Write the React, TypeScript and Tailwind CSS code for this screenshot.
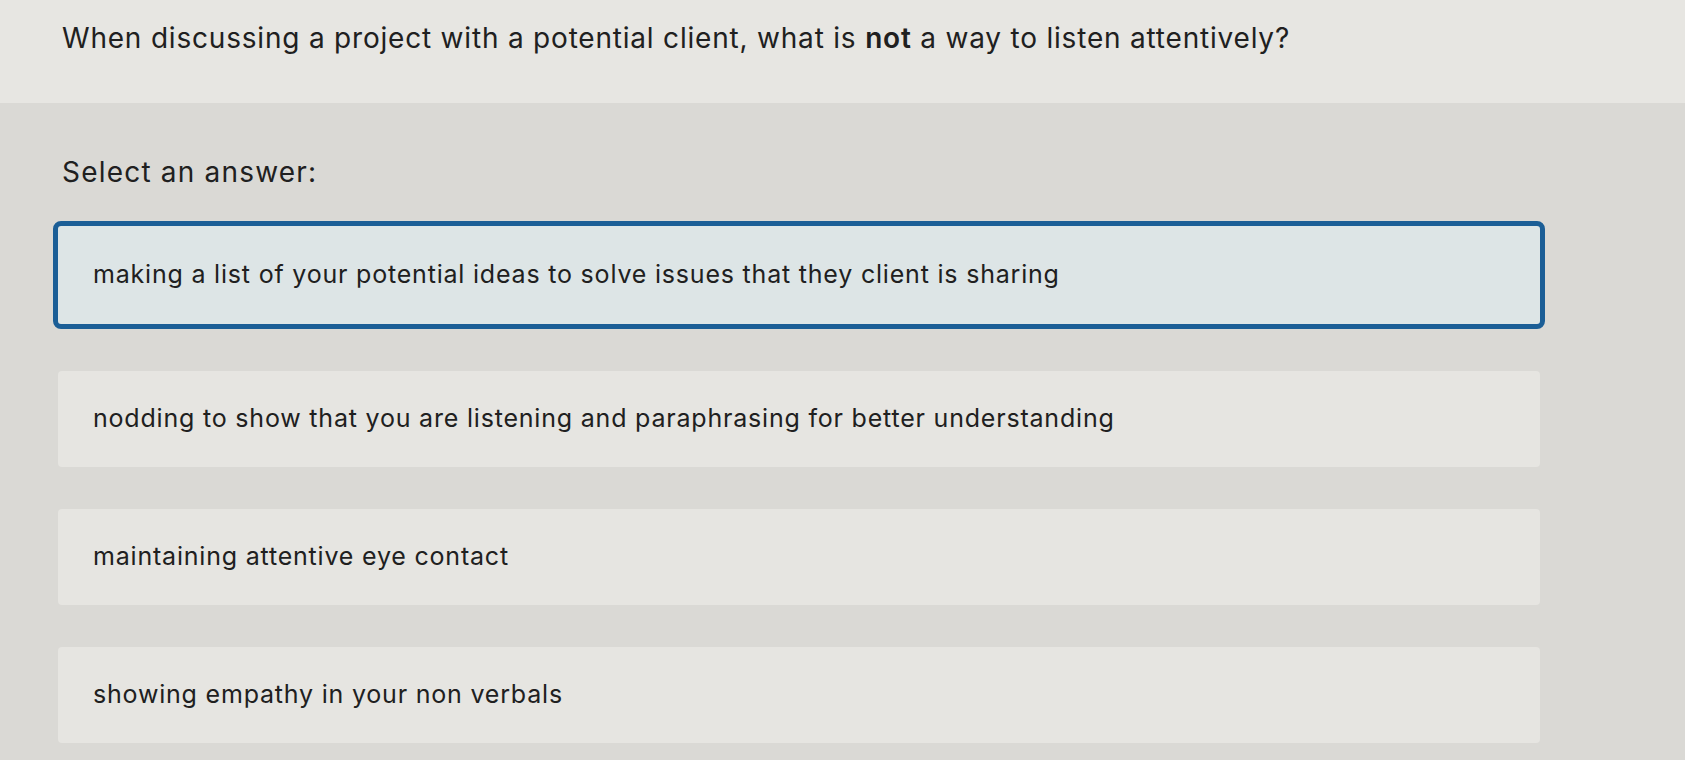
const answers = [
  "making a list of your potential ideas to solve issues that they client is sharing",
  "nodding to show that you are listening and paraphrasing for better understanding",
  "maintaining attentive eye contact",
  "showing empathy in your non verbals",
];

function Answer({ text, selected }: { text: string; selected: boolean }) {
  if (selected) {
    return (
      <div className="-mx-[5px] flex h-[108px] items-center rounded-[8px] border-[5px] border-[#1b5e96] bg-[#dde5e6] pl-[35px]">
        <span>{text}</span>
      </div>
    );
  }
  return (
    <div className="flex h-[96px] items-center rounded-[4px] bg-[#e6e5e1] pl-[35px]">
      <span>{text}</span>
    </div>
  );
}

export default function App() {
  return (
    <div
      className="min-h-screen bg-[#dad9d5] text-[#202020]"
      style={{ fontFamily: "Inter, 'Open Sans', sans-serif" }}
    >
      <div className="h-[103px] bg-[#e7e6e2] pl-[62px] pt-[20px] text-[28px] leading-[36px] tracking-[0.8px]">
        When discussing a project with a potential client, what is{" "}
        <span className="font-semibold">not</span> a way to listen attentively?
      </div>
      <div className="pl-[58px] pr-[145px]">
        <div className="pl-[4px] pt-[51px] text-[28px] leading-[36px] tracking-[1.2px]">
          Select an answer:
        </div>
        <div className="mt-[31px] flex flex-col gap-[42px] text-[25px] tracking-[0.8px]">
          {answers.map((a, i) => (
            <Answer key={i} text={a} selected={i === 0} />
          ))}
        </div>
      </div>
    </div>
  );
}
